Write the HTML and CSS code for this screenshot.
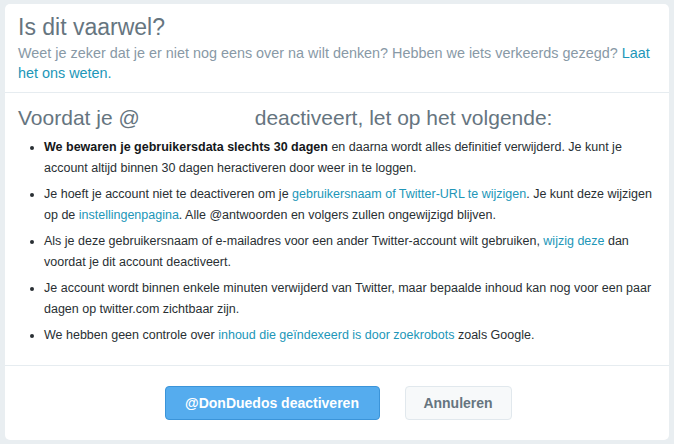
FILE: index.html
```html
<!DOCTYPE html>
<html lang="nl">
<head>
    <meta charset="UTF-8">
    <meta name="viewport" content="width=device-width, initial-scale=1.0">
    <title>Account deactiveren</title>
    <link rel="stylesheet" href="styles.css">
</head>
<body>
    <div class="card">
        <!-- header -->
        <div class="card-header">
            <h1 class="title">Is dit vaarwel?</h1>
            <p class="subtitle">Weet je zeker dat je er niet nog eens over na wilt denken? Hebben we iets verkeerds gezegd? <a href="#">Laat het ons weten.</a></p>
        </div>
        <!-- body -->
        <div class="card-body">
            <h2 class="heading">Voordat je @<span class="redacted"></span>deactiveert, let op het volgende:</h2>
            <ul class="notes">
                <li><strong>We bewaren je gebruikersdata slechts 30 dagen</strong> en daarna wordt alles definitief verwijderd. Je kunt je account altijd binnen 30 dagen heractiveren door weer in te loggen.</li>
                <li>Je hoeft je account niet te deactiveren om je <a href="#">gebruikersnaam of Twitter-URL te wijzigen</a>. Je kunt deze wijzigen op de <a href="#">instellingenpagina</a>. Alle @antwoorden en volgers zullen ongewijzigd blijven.</li>
                <li>Als je deze gebruikersnaam of e-mailadres voor een ander Twitter-account wilt gebruiken, <a href="#">wijzig deze</a> dan voordat je dit account deactiveert.</li>
                <li>Je account wordt binnen enkele minuten verwijderd van Twitter, maar bepaalde inhoud kan nog voor een paar dagen op twitter.com zichtbaar zijn.</li>
                <li>We hebben geen controle over <a href="#">inhoud die geïndexeerd is door zoekrobots</a> zoals Google.</li>
            </ul>
        </div>
        <!-- footer -->
        <div class="card-footer">
            <a href="#" class="btn btn-primary">@DonDuedos deactiveren</a>
            <a href="#" class="btn btn-cancel">Annuleren</a>
        </div>
    </div>
</body>
</html>
```

FILE: styles.css
```css
:root{
    --link-color: #2196b8;
    --border-color: #e6ecf0;
}
*{
    box-sizing: border-box;
}
body{
    margin: 0;
    background-color: #e9eef1;
    font-family: "Liberation Sans", Arial, sans-serif;
    color: #292f33;
}
a{
    color: var(--link-color);
    text-decoration: none;
}
.card{
    margin: 4px 5px;
    height: 436px;
    background-color: #fff;
    border-radius: 5px;
    display: flex;
    flex-direction: column;
}
/* header */
.card-header{
    padding: 8px 5px 10px 13px;
    border-bottom: 1px solid var(--border-color);
    height: 89px;
}
.title{
    margin: 0;
    font-size: 23px;
    font-weight: normal;
    color: #66757f;
    line-height: 30px;
}
.subtitle{
    margin: 1px 0 0 0;
    font-size: 14.4px;
    line-height: 20px;
    color: #8899a6;
}
/* body */
.card-body{
    padding: 12px 13px 0 13px;
    flex: 1;
    border-bottom: 1px solid var(--border-color);
}
.heading{
    margin: 0;
    font-size: 21px;
    font-weight: normal;
    color: #66757f;
    line-height: 26px;
}
.redacted{
    display: inline-block;
    width: 115px;
}
.notes{
    margin: 6px 0 0 0;
    padding-left: 26px;
    font-size: 12.5px;
    line-height: 21px;
}
.notes li{
    margin-bottom: 5px;
}
.notes strong{
    color: #14171a;
}
/* footer */
.card-footer{
    height: 74px;
    display: flex;
    justify-content: center;
    align-items: center;
    gap: 25px;
    padding-left: 2px;
}
.btn{
    display: block;
    height: 34px;
    line-height: 32px;
    padding: 0 16px;
    font-size: 14px;
    font-weight: bold;
    border-radius: 4px;
    border: 1px solid transparent;
}
.btn-primary{
    background-color: #55acee;
    border-color: #3b94d9;
    color: #fff;
    width: 215px;
    text-align: center;
}
.btn-cancel{
    background-color: #f7f9fa;
    border-color: #e1e8ed;
    color: #66757f;
    width: 107px;
    text-align: center;
}
```
